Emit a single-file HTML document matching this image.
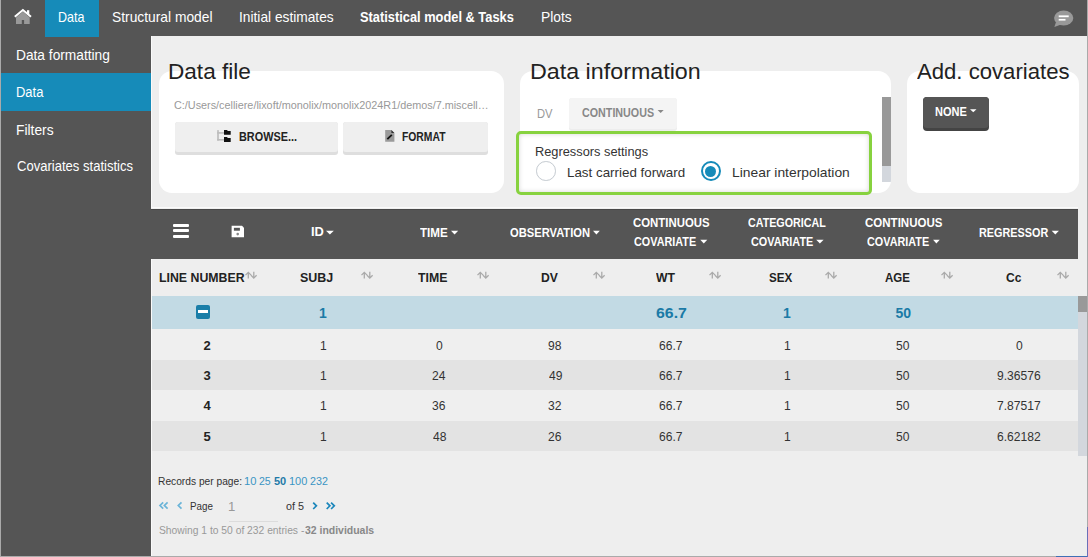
<!DOCTYPE html>
<html><head><meta charset="utf-8"><style>
html,body{margin:0;padding:0;}
body{width:1088px;height:557px;position:relative;overflow:hidden;background:#eeeeee;font-family:"Liberation Sans",sans-serif;}
.a{position:absolute;}
.t{position:absolute;white-space:pre;line-height:1;transform-origin:0 0;font-family:"Liberation Sans",sans-serif;}
</style></head><body>
<!-- topbar -->
<div class="a" style="left:0;top:0;width:1088px;height:36.4px;background:#555555"></div>
<div class="a" style="left:0;top:36px;width:151px;height:521px;background:#555555"></div>
<div class="a" style="left:45px;top:0;width:54px;height:37px;background:#168bb9"></div>
<!-- home icon -->
<svg class="a" style="left:0;top:0" width="40" height="37" viewBox="0 0 40 37">
  <path d="M16 17.5 L23 11.5 L29.7 17.5 L29.7 24 L24.1 24 L24.1 20 L21.8 20 L21.8 24 L16 24 Z" fill="#999"/>
  <rect x="27" y="10.2" width="2.3" height="4" fill="#fff"/>
  <path d="M14.8 16.8 L22.9 10 L31 16.8" fill="none" stroke="#fff" stroke-width="2"/>
</svg>
<!-- chat icon -->
<svg class="a" style="left:1040px;top:0" width="48" height="37" viewBox="0 0 48 37">
  <ellipse cx="23.7" cy="18" rx="9.6" ry="7.6" fill="#999"/>
  <path d="M16 22 L14.4 27 L21 24.5 Z" fill="#999"/>
  <rect x="18.7" y="15.4" width="10" height="1.8" fill="#fff"/>
  <rect x="18.7" y="18.9" width="6.8" height="1.7" fill="#fff"/>
</svg>
<!-- sidebar -->
<div class="a" style="left:0;top:73.4px;width:151px;height:37.5px;background:#168bb9"></div>
<!-- cards -->
<div class="a" style="left:159px;top:71px;width:345px;height:121.5px;background:#fff;border-radius:13px"></div>
<div class="a" style="left:520px;top:71px;width:371px;height:122px;background:#fff;border-radius:13px;overflow:hidden">
  <div class="a" style="left:361.5px;top:25.6px;width:9.5px;height:69.5px;background:#999"></div>
  <div class="a" style="left:361.5px;top:95px;width:9.5px;height:16px;background:#d3d7dd"></div>
</div>
<div class="a" style="left:907px;top:71px;width:172px;height:121.5px;background:#fff;border-radius:13px"></div>
<!-- buttons -->
<div class="a" style="left:175px;top:121.5px;width:163px;height:33.5px;background:#dedede;border-radius:3px"></div>
<div class="a" style="left:175px;top:121.5px;width:163px;height:30.5px;background:#efefef;border-radius:3px"></div>
<div class="a" style="left:342.5px;top:121.5px;width:145.2px;height:33.5px;background:#dedede;border-radius:3px"></div>
<div class="a" style="left:342.5px;top:121.5px;width:145.2px;height:30.5px;background:#efefef;border-radius:3px"></div>
<!-- browse icon -->
<svg class="a" style="left:210px;top:125px" width="26" height="22" viewBox="210 125 26 22">
  <rect x="217.2" y="130.1" width="1.6" height="10.5" fill="#bbb"/>
  <rect x="217.2" y="132.1" width="7" height="1.6" fill="#bbb"/>
  <rect x="217.2" y="139" width="7" height="1.6" fill="#bbb"/>
  <path d="M224 130.1 H227 L227.8 131 H230.7 V134.8 H224 Z" fill="#111"/>
  <path d="M224 137.1 H227 L227.8 138 H230.7 V142 H224 Z" fill="#111"/>
</svg>
<!-- format icon -->
<svg class="a" style="left:380px;top:125px" width="20" height="22" viewBox="380 125 20 22">
  <path d="M385.2 130 H391.4 L394.4 133 V141.8 H385.2 Z" fill="#9a9a9a"/>
  <path d="M391.4 130 L394.4 133 H391.4 Z" fill="#333"/>
  <path d="M387.3 139.2 L391.8 134.8" stroke="#111" stroke-width="1.8"/>
</svg>
<!-- continuous dropdown -->
<div class="a" style="left:569px;top:97.5px;width:108px;height:33px;background:#ededed;border-radius:3px"></div>
<div class="a" style="left:569px;top:97.5px;width:108px;height:31px;background:#f4f4f4;border-radius:3px"></div>
<svg class="a" style="left:655px;top:108px" width="12" height="8" viewBox="0 0 12 8"><path d="M2.6 2 H8.7 L5.65 5 Z" fill="#888"/></svg>
<!-- none button -->
<div class="a" style="left:923px;top:96.6px;width:66.4px;height:34.2px;background:#444;border-radius:4px"></div>
<div class="a" style="left:923px;top:96.6px;width:66.4px;height:31.5px;background:#555;border-radius:4px"></div>
<svg class="a" style="left:968px;top:107px" width="12" height="8" viewBox="0 0 12 8"><path d="M2 2.3 H8.5 L5.25 5.3 Z" fill="#fff"/></svg>
<!-- green annotation -->
<div class="a" style="left:516px;top:131.4px;width:356.3px;height:63.2px;box-sizing:border-box;border:3.8px solid #87d23f;border-radius:5px;background:#fff;box-shadow:inset 0 0 5px rgba(0,0,0,0.16)"></div>
<!-- radios -->
<div class="a" style="left:536.2px;top:161.3px;width:19.6px;height:19.6px;box-sizing:border-box;border:1.5px solid #c4cad0;border-radius:50%;background:#fff"></div>
<div class="a" style="left:700.9px;top:161.1px;width:19.8px;height:19.8px;box-sizing:border-box;border:2px solid #168bb9;border-radius:50%;background:#fff"></div>
<div class="a" style="left:705.3px;top:165.5px;width:11px;height:11px;border-radius:50%;background:#168bb9"></div>
<!-- table dark header -->
<div class="a" style="left:151px;top:208.5px;width:926.5px;height:50px;background:#555555"></div>
<div class="a" style="left:151px;top:208.5px;width:926.5px;height:1px;background:#474747"></div>
<!-- hamburger -->
<div class="a" style="left:173px;top:223.7px;width:16px;height:2.9px;background:#fff;border-radius:1px"></div>
<div class="a" style="left:173px;top:229.2px;width:16px;height:2.9px;background:#fff;border-radius:1px"></div>
<div class="a" style="left:173px;top:234.7px;width:16px;height:2.9px;background:#fff;border-radius:1px"></div>
<!-- save icon -->
<svg class="a" style="left:228px;top:222px" width="20" height="20" viewBox="228 222 20 20">
  <path d="M231.6 225.8 H242 L244 227.8 V237.3 H231.6 Z" fill="#fff"/>
  <rect x="233.9" y="227.8" width="6" height="2.9" fill="#555"/>
  <circle cx="237.7" cy="234.1" r="1.3" fill="#888"/>
</svg>
<!-- carets dark header -->
<svg class="a" style="left:0;top:0" width="1088" height="260" viewBox="0 0 1088 260">
  <g fill="#fff">
    <path d="M326 230.8 H333.8 L329.9 234.5 Z"/>
    <path d="M451 230.8 H458.2 L454.6 234.5 Z"/>
    <path d="M593 230.8 H599.8 L596.4 234.5 Z"/>
    <path d="M700.3 239.8 H707.3 L703.8 243.5 Z"/>
    <path d="M816.2 239.8 H823.6 L819.9 243.5 Z"/>
    <path d="M933.1 239.8 H939.7 L936.4 243.5 Z"/>
    <path d="M1051.7 230.8 H1058.9 L1055.3 234.5 Z"/>
  </g>
</svg>
<!-- group row & rows -->
<div class="a" style="left:151px;top:295.7px;width:926.5px;height:33.1px;background:#c2dae4"></div>
<div class="a" style="left:151px;top:328.8px;width:926.5px;height:30.9px;background:#efefef"></div>
<div class="a" style="left:151px;top:359.7px;width:926.5px;height:30.1px;background:#e3e3e3"></div>
<div class="a" style="left:151px;top:389.8px;width:926.5px;height:31.5px;background:#efefef"></div>
<div class="a" style="left:151px;top:421.3px;width:926.5px;height:29.6px;background:#e3e3e3"></div>
<!-- minus icon -->
<div class="a" style="left:195.8px;top:305px;width:14.2px;height:13.8px;background:#1a7ea8;border-radius:2px"></div>
<div class="a" style="left:198px;top:310.2px;width:10px;height:3.2px;background:#fff"></div>
<!-- table scrollbar -->
<div class="a" style="left:1077.6px;top:295.5px;width:9.4px;height:160.2px;background:#d3d7dd"></div>
<div class="a" style="left:1077.6px;top:295.5px;width:9.4px;height:16px;background:#999"></div>
<svg class="a" style="left:0;top:260px" width="1088" height="30" viewBox="0 260 1088 30"><g fill="none" stroke="#aaa" stroke-width="1.3"><path d="M248.30 278.6 V272.3 M245.50 275.1 L248.30 272.3 L251.10 275.1"/><path d="M253.80 271.8 V278.1 M251.00 275.3 L253.80 278.1 L256.60 275.3"/><path d="M364.30 278.6 V272.3 M361.50 275.1 L364.30 272.3 L367.10 275.1"/><path d="M369.80 271.8 V278.1 M367.00 275.3 L369.80 278.1 L372.60 275.3"/><path d="M480.30 278.6 V272.3 M477.50 275.1 L480.30 272.3 L483.10 275.1"/><path d="M485.80 271.8 V278.1 M483.00 275.3 L485.80 278.1 L488.60 275.3"/><path d="M596.30 278.6 V272.3 M593.50 275.1 L596.30 272.3 L599.10 275.1"/><path d="M601.80 271.8 V278.1 M599.00 275.3 L601.80 278.1 L604.60 275.3"/><path d="M712.30 278.6 V272.3 M709.50 275.1 L712.30 272.3 L715.10 275.1"/><path d="M717.80 271.8 V278.1 M715.00 275.3 L717.80 278.1 L720.60 275.3"/><path d="M828.30 278.6 V272.3 M825.50 275.1 L828.30 272.3 L831.10 275.1"/><path d="M833.80 271.8 V278.1 M831.00 275.3 L833.80 278.1 L836.60 275.3"/><path d="M944.30 278.6 V272.3 M941.50 275.1 L944.30 272.3 L947.10 275.1"/><path d="M949.80 271.8 V278.1 M947.00 275.3 L949.80 278.1 L952.60 275.3"/><path d="M1060.30 278.6 V272.3 M1057.50 275.1 L1060.30 272.3 L1063.10 275.1"/><path d="M1065.80 271.8 V278.1 M1063.00 275.3 L1065.80 278.1 L1068.60 275.3"/></g></svg>
<svg class="a" style="left:150px;top:495px" width="200" height="20" viewBox="150 495 200 20">
<g fill="none" stroke-width="1.7" stroke-linecap="butt" stroke-linejoin="miter">
<path d="M163.2 502.4 L160 505.5 L163.2 508.6 M167.6 502.4 L164.4 505.5 L167.6 508.6" stroke="#6ab4d8"/>
<path d="M181.5 502.4 L178.3 505.5 L181.5 508.6" stroke="#6ab4d8"/>
<path d="M313.2 502.6 L316.4 505.8 L313.2 509" stroke="#1b86bb"/>
<path d="M326.7 502.6 L329.9 505.8 L326.7 509 M331.1 502.6 L334.3 505.8 L331.1 509" stroke="#1b86bb"/>
</g></svg>
<!-- input underline -->
<div class="a" style="left:228.8px;top:521.2px;width:49.4px;height:1.2px;background:#dcdcdc"></div>
<!-- highlights -->
<div class="a" style="left:151px;top:36.4px;width:1px;height:172px;background:#fafafa"></div>
<div class="a" style="left:151px;top:207.4px;width:927px;height:1px;background:#fafafa"></div>
<div class="a" style="left:151px;top:258.5px;width:1px;height:297.5px;background:#fafafa"></div>
<!-- frame borders -->
<div class="a" style="left:0;top:0;width:1px;height:557px;background:#aaa"></div>
<div class="a" style="left:0;top:556px;width:1088px;height:1px;background:#aaa"></div>
<div class="a" style="left:1087px;top:0;width:1px;height:557px;background:#aaa"></div>
<div class="a" style="left:1056px;top:556px;width:32px;height:1px;background:#3f6fb5"></div>
<div class="a" style="left:1087px;top:527px;width:1px;height:30px;background:#6a6fb8"></div>

<div class="t" style="left:58.39px;top:11px;font-size:13.75px;font-weight:400;color:#fff;transform:scaleX(0.9098)">Data</div>
<div class="t" style="left:112.38px;top:11px;font-size:13.75px;font-weight:400;color:#fff;transform:scaleX(1.0037)">Structural model</div>
<div class="t" style="left:238.67px;top:11px;font-size:13.75px;font-weight:400;color:#fff;transform:scaleX(0.9990)">Initial estimates</div>
<div class="t" style="left:360.39px;top:11px;font-size:13.75px;font-weight:700;color:#fff;transform:scaleX(0.9332)">Statistical model & Tasks</div>
<div class="t" style="left:540.78px;top:11px;font-size:13.75px;font-weight:400;color:#fff;transform:scaleX(1.0029)">Plots</div>
<div class="t" style="left:15.98px;top:48px;font-size:14.0px;font-weight:400;color:#fff;transform:scaleX(0.9809)">Data formatting</div>
<div class="t" style="left:16.05px;top:85px;font-size:14.0px;font-weight:400;color:#fff;transform:scaleX(0.9261)">Data</div>
<div class="t" style="left:15.97px;top:123px;font-size:14.0px;font-weight:400;color:#fff;transform:scaleX(0.9866)">Filters</div>
<div class="t" style="left:16.51px;top:159px;font-size:14.0px;font-weight:400;color:#fff;transform:scaleX(0.9325)">Covariates statistics</div>
<div class="t" style="left:168.04px;top:61px;font-size:22.5px;font-weight:400;color:#222;transform:scaleX(1.0039)">Data file</div>
<div class="t" style="left:529.67px;top:61px;font-size:22.5px;font-weight:400;color:#222;transform:scaleX(1.0343)">Data information</div>
<div class="t" style="left:917.19px;top:61px;font-size:22.5px;font-weight:400;color:#222;transform:scaleX(0.9833)">Add. covariates</div>
<div class="t" style="left:174.48px;top:100px;font-size:11.0px;font-weight:400;color:#999;transform:scaleX(0.9839)">C:/Users/celliere/lixoft/monolix/monolix2024R1/demos/7.miscell…</div>
<div class="t" style="left:238.55px;top:131px;font-size:12.0px;font-weight:700;color:#222;transform:scaleX(0.9066)">BROWSE...</div>
<div class="t" style="left:401.80px;top:131px;font-size:12.0px;font-weight:700;color:#222;transform:scaleX(0.8625)">FORMAT</div>
<div class="t" style="left:536.99px;top:108px;font-size:12.75px;font-weight:400;color:#999;transform:scaleX(0.8772)">DV</div>
<div class="t" style="left:581.53px;top:107px;font-size:12.25px;font-weight:700;color:#888;transform:scaleX(0.8755)">CONTINUOUS</div>
<div class="t" style="left:535.34px;top:146px;font-size:12.75px;font-weight:400;color:#333;transform:scaleX(1.0037)">Regressors settings</div>
<div class="t" style="left:567.30px;top:166px;font-size:13.5px;font-weight:400;color:#333;transform:scaleX(0.9903)">Last carried forward</div>
<div class="t" style="left:732.26px;top:166px;font-size:13.5px;font-weight:400;color:#333;transform:scaleX(1.0258)">Linear interpolation</div>
<div class="t" style="left:935.09px;top:106px;font-size:12.75px;font-weight:700;color:#fff;transform:scaleX(0.8639)">NONE</div>
<div class="t" style="left:310.62px;top:226px;font-size:12.75px;font-weight:700;color:#fff;transform:scaleX(1.0086)">ID</div>
<div class="t" style="left:419.60px;top:227px;font-size:12.75px;font-weight:700;color:#fff;transform:scaleX(0.9122)">TIME</div>
<div class="t" style="left:509.70px;top:227px;font-size:12.75px;font-weight:700;color:#fff;transform:scaleX(0.8758)">OBSERVATION</div>
<div class="t" style="left:633.19px;top:217px;font-size:12.75px;font-weight:700;color:#fff;transform:scaleX(0.8933)">CONTINUOUS</div>
<div class="t" style="left:634.31px;top:236px;font-size:12.75px;font-weight:700;color:#fff;transform:scaleX(0.8489)">COVARIATE</div>
<div class="t" style="left:748.02px;top:217px;font-size:12.75px;font-weight:700;color:#fff;transform:scaleX(0.8397)">CATEGORICAL</div>
<div class="t" style="left:750.51px;top:236px;font-size:12.75px;font-weight:700;color:#fff;transform:scaleX(0.8503)">COVARIATE</div>
<div class="t" style="left:864.78px;top:217px;font-size:12.75px;font-weight:700;color:#fff;transform:scaleX(0.9039)">CONTINUOUS</div>
<div class="t" style="left:867.01px;top:236px;font-size:12.75px;font-weight:700;color:#fff;transform:scaleX(0.8489)">COVARIATE</div>
<div class="t" style="left:979.30px;top:227px;font-size:12.75px;font-weight:700;color:#fff;transform:scaleX(0.8495)">REGRESSOR</div>
<div class="t" style="left:158.77px;top:271px;font-size:13.0px;font-weight:700;color:#222;transform:scaleX(0.9478)">LINE NUMBER</div>
<div class="t" style="left:300.09px;top:271px;font-size:13.0px;font-weight:700;color:#222;transform:scaleX(0.9578)">SUBJ</div>
<div class="t" style="left:418.39px;top:271px;font-size:13.0px;font-weight:700;color:#222;transform:scaleX(0.9476)">TIME</div>
<div class="t" style="left:540.59px;top:271px;font-size:13.0px;font-weight:700;color:#222;transform:scaleX(0.9356)">DV</div>
<div class="t" style="left:655.79px;top:271px;font-size:13.0px;font-weight:700;color:#222;transform:scaleX(0.9384)">WT</div>
<div class="t" style="left:769.44px;top:271px;font-size:13.0px;font-weight:700;color:#222;transform:scaleX(0.8936)">SEX</div>
<div class="t" style="left:884.53px;top:271px;font-size:13.0px;font-weight:700;color:#222;transform:scaleX(0.8827)">AGE</div>
<div class="t" style="left:1005.87px;top:271px;font-size:13.0px;font-weight:700;color:#222;transform:scaleX(0.9261)">Cc</div>
<div class="t" style="left:319.12px;top:306px;font-size:14.0px;font-weight:700;color:#1b7aa6;transform:scaleX(1.0000)">1</div>
<div class="t" style="left:655.85px;top:306px;font-size:14.0px;font-weight:700;color:#1b7aa6;transform:scaleX(1.1320)">66.7</div>
<div class="t" style="left:782.92px;top:306px;font-size:14.0px;font-weight:700;color:#1b7aa6;transform:scaleX(1.0000)">1</div>
<div class="t" style="left:895.42px;top:306px;font-size:14.0px;font-weight:700;color:#1b7aa6;transform:scaleX(1.0000)">50</div>
<div class="t" style="left:203.58px;top:339px;font-size:13.0px;font-weight:700;color:#222;transform:scaleX(1.0000)">2</div>
<div class="t" style="left:319.58px;top:339px;font-size:13.0px;font-weight:400;color:#333;transform:scaleX(0.9300)">1</div>
<div class="t" style="left:435.81px;top:339px;font-size:13.0px;font-weight:400;color:#333;transform:scaleX(0.9300)">0</div>
<div class="t" style="left:548.46px;top:339px;font-size:13.0px;font-weight:400;color:#333;transform:scaleX(0.9300)">98</div>
<div class="t" style="left:659.42px;top:339px;font-size:13.0px;font-weight:400;color:#333;transform:scaleX(0.9300)">66.7</div>
<div class="t" style="left:783.58px;top:339px;font-size:13.0px;font-weight:400;color:#333;transform:scaleX(0.9300)">1</div>
<div class="t" style="left:896.25px;top:339px;font-size:13.0px;font-weight:400;color:#333;transform:scaleX(0.9300)">50</div>
<div class="t" style="left:1015.81px;top:339px;font-size:13.0px;font-weight:400;color:#333;transform:scaleX(0.9300)">0</div>
<div class="t" style="left:203.49px;top:369px;font-size:13.0px;font-weight:700;color:#222;transform:scaleX(1.0000)">3</div>
<div class="t" style="left:319.58px;top:369px;font-size:13.0px;font-weight:400;color:#333;transform:scaleX(0.9300)">1</div>
<div class="t" style="left:432.26px;top:369px;font-size:13.0px;font-weight:400;color:#333;transform:scaleX(0.9300)">24</div>
<div class="t" style="left:548.60px;top:369px;font-size:13.0px;font-weight:400;color:#333;transform:scaleX(0.9300)">49</div>
<div class="t" style="left:659.42px;top:369px;font-size:13.0px;font-weight:400;color:#333;transform:scaleX(0.9300)">66.7</div>
<div class="t" style="left:783.58px;top:369px;font-size:13.0px;font-weight:400;color:#333;transform:scaleX(0.9300)">1</div>
<div class="t" style="left:896.25px;top:369px;font-size:13.0px;font-weight:400;color:#333;transform:scaleX(0.9300)">50</div>
<div class="t" style="left:997.29px;top:369px;font-size:13.0px;font-weight:400;color:#333;transform:scaleX(0.9300)">9.36576</div>
<div class="t" style="left:203.41px;top:399px;font-size:13.0px;font-weight:700;color:#222;transform:scaleX(1.0000)">4</div>
<div class="t" style="left:319.58px;top:399px;font-size:13.0px;font-weight:400;color:#333;transform:scaleX(0.9300)">1</div>
<div class="t" style="left:432.45px;top:399px;font-size:13.0px;font-weight:400;color:#333;transform:scaleX(0.9300)">36</div>
<div class="t" style="left:548.42px;top:399px;font-size:13.0px;font-weight:400;color:#333;transform:scaleX(0.9300)">32</div>
<div class="t" style="left:659.42px;top:399px;font-size:13.0px;font-weight:400;color:#333;transform:scaleX(0.9300)">66.7</div>
<div class="t" style="left:783.58px;top:399px;font-size:13.0px;font-weight:400;color:#333;transform:scaleX(0.9300)">1</div>
<div class="t" style="left:896.25px;top:399px;font-size:13.0px;font-weight:400;color:#333;transform:scaleX(0.9300)">50</div>
<div class="t" style="left:997.30px;top:399px;font-size:13.0px;font-weight:400;color:#333;transform:scaleX(0.9300)">7.87517</div>
<div class="t" style="left:203.44px;top:430px;font-size:13.0px;font-weight:700;color:#222;transform:scaleX(1.0000)">5</div>
<div class="t" style="left:319.58px;top:430px;font-size:13.0px;font-weight:400;color:#333;transform:scaleX(0.9300)">1</div>
<div class="t" style="left:432.62px;top:430px;font-size:13.0px;font-weight:400;color:#333;transform:scaleX(0.9300)">48</div>
<div class="t" style="left:548.47px;top:430px;font-size:13.0px;font-weight:400;color:#333;transform:scaleX(0.9300)">26</div>
<div class="t" style="left:659.42px;top:430px;font-size:13.0px;font-weight:400;color:#333;transform:scaleX(0.9300)">66.7</div>
<div class="t" style="left:783.58px;top:430px;font-size:13.0px;font-weight:400;color:#333;transform:scaleX(0.9300)">1</div>
<div class="t" style="left:896.25px;top:430px;font-size:13.0px;font-weight:400;color:#333;transform:scaleX(0.9300)">50</div>
<div class="t" style="left:997.30px;top:430px;font-size:13.0px;font-weight:400;color:#333;transform:scaleX(0.9300)">6.62182</div>
<div class="t" style="left:158.29px;top:476px;font-size:11.0px;font-weight:400;color:#333;transform:scaleX(0.9288)">Records per page:</div>
<div class="t" style="left:243.60px;top:476px;font-size:11.0px;font-weight:400;color:#3a95c4;transform:scaleX(1.0134)">10</div>
<div class="t" style="left:259.02px;top:476px;font-size:11.0px;font-weight:400;color:#3a95c4;transform:scaleX(0.9602)">25</div>
<div class="t" style="left:274.42px;top:476px;font-size:11.0px;font-weight:700;color:#1f7aa8;transform:scaleX(0.9991)">50</div>
<div class="t" style="left:289.42px;top:476px;font-size:11.0px;font-weight:400;color:#3a95c4;transform:scaleX(0.9976)">100</div>
<div class="t" style="left:310.42px;top:476px;font-size:11.0px;font-weight:400;color:#3a95c4;transform:scaleX(0.9731)">232</div>
<div class="t" style="left:189.95px;top:501px;font-size:11.25px;font-weight:400;color:#333;transform:scaleX(0.8723)">Page</div>
<div class="t" style="left:228.27px;top:500px;font-size:13.0px;font-weight:400;color:#999;transform:scaleX(1.0099)">1</div>
<div class="t" style="left:286.24px;top:501px;font-size:11.25px;font-weight:400;color:#333;transform:scaleX(0.9576)">of 5</div>
<div class="t" style="left:158.61px;top:525px;font-size:11.0px;font-weight:400;color:#999;transform:scaleX(0.9355)">Showing 1 to 50 of 232 entries -</div>
<div class="t" style="left:305.33px;top:525px;font-size:11.0px;font-weight:700;color:#888;transform:scaleX(0.9507)">32 individuals</div>

</body></html>
